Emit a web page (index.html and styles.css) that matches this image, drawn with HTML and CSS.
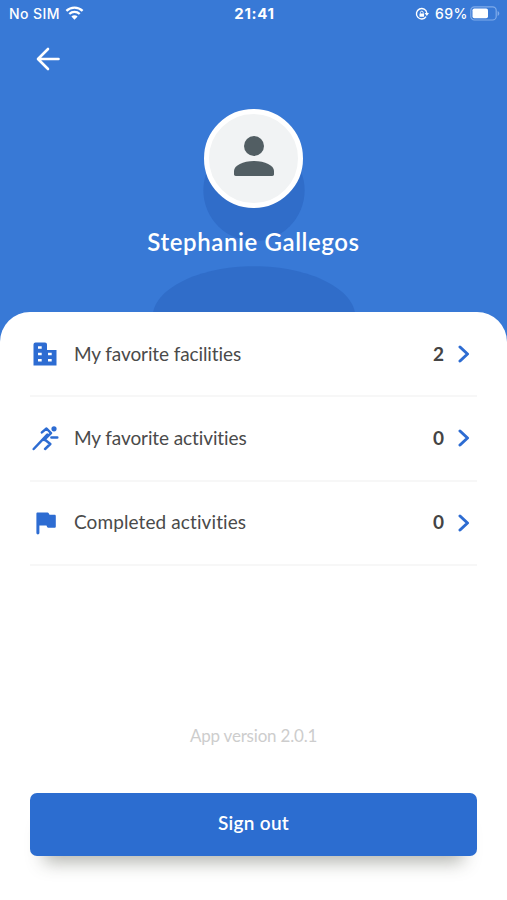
FILE: index.html
```html
<!DOCTYPE html>
<html lang="en">
<head>
  <meta charset="UTF-8">
  <meta name="viewport" content="width=device-width, initial-scale=1.0">
  <title>Profile</title>
  <link rel="stylesheet" href="styles.css">
</head>
<body>
<div class="screen">
  <header class="header">
    <svg class="backdrop" viewBox="0 0 24 24"><circle cx="12" cy="8" r="4"/><path d="M12 14c-4.4 0-8 1.8-8 4v2h16v-2c0-2.2-3.6-4-8-4z"/></svg>

    <div class="status">
      <div class="status-left">
        <span class="carrier">No SIM</span>
        <svg class="wifi" width="19" height="14" viewBox="0 0 19 14">
          <path d="M1.4 4.9a11.6 11.6 0 0 1 16.2 0M4.3 8a7.4 7.4 0 0 1 10.4 0" fill="none" stroke="#fff" stroke-width="2.3"/>
          <path d="M9.5 13.8L6.4 10.6a4.4 4.4 0 0 1 6.2 0z" fill="#fff"/>
        </svg>
      </div>
      <span class="clock">21:41</span>
      <div class="status-right">
        <svg class="lock" width="14" height="14" viewBox="0 0 14 14">
          <path d="M11 9.6A5.2 5.2 0 1 1 11.800 6" fill="none" stroke="#fff" stroke-width="1.400"/>
          <path d="M9.600 6h4.400l-2.200 3z" fill="#fff"/>
          <rect x="4.500" y="6.400" width="4.600" height="3.300" rx=".5" fill="#fff"/>
          <path d="M5.400 6.600V5.600a1.400 1.400 0 0 1 2.800 0v1" fill="none" stroke="#fff" stroke-width=".9"/>
        </svg>
        <span class="percent">69%</span>
        <svg class="battery" width="30" height="15" viewBox="0 0 30 15">
          <rect x=".8" y=".8" width="25.400" height="13.200" rx="3.600" fill="none" stroke="#7fabea" stroke-width="1.200"/>
          <rect x="2.500" y="2.500" width="15.500" height="9.800" rx="1.800" fill="#fff"/>
          <path d="M27.600 5v5c1-.4 1.700-1.300 1.700-2.500S28.600 5.400 27.600 5z" fill="#7fabea"/>
        </svg>
      </div>
    </div>

    <button class="back" aria-label="Back">
      <svg width="24" height="24" viewBox="0 0 24 24"><path d="M22.500 12H2.500M12 2L2 12l10 10" fill="none" stroke="#fff" stroke-width="2.600" stroke-linecap="round" stroke-linejoin="round"/></svg>
    </button>

    <div class="avatar">
      <svg width="60" height="60" viewBox="0 0 24 24"><circle cx="12" cy="8" r="4"/><path d="M12 14c-4.400 0-8 1.800-8 4v1.300c0 .4.300.7.700.7h14.600c.4 0 .7-.3.700-.7V18c0-2.200-3.600-4-8-4z"/></svg>
    </div>
    <h1 class="name">Stephanie Gallegos</h1>
  </header>

  <main class="card">
    <ul class="list">
      <li class="row">
        <svg class="icon" width="28" height="28" viewBox="0 0 28 28">
          <path fill-rule="evenodd" d="M4.500 2.500h8.500a2 2 0 0 1 2 2V10h9.500v15.500h-23v-21a2 2 0 0 1 2-2zM6 6.300v2.400h3.700V6.300zM6 12.800v2.400h3.700v-2.400zM6 19v2.400h3.700V19zM16 12.800v2.400h3.700v-2.400zM16 19v2.400h3.700V19z"/>
        </svg>
        <span class="label">My favorite facilities</span>
        <span class="count">2</span>
        <svg class="chevron" width="12" height="18" viewBox="0 0 12 18"><path d="M2 2l7.500 7L2 16"/></svg>
      </li>
      <li class="row">
        <svg class="icon" width="28" height="28" viewBox="0 0 28 28">
          <circle cx="22" cy="4.800" r="2.600"/>
          <path class="line" d="M9.900 8.400l4.600-3.900 4.500 4.600-7.100 6.900M1.700 25l13.600-14.300M13 15.700l5.300 4.300-5.200 5M19.400 13.500h5.900"/>
        </svg>
        <span class="label activities">My favorite activities</span>
        <span class="count">0</span>
        <svg class="chevron" width="12" height="18" viewBox="0 0 12 18"><path d="M2 2l7.500 7L2 16"/></svg>
      </li>
      <li class="row">
        <svg class="icon" width="28" height="28" viewBox="0 0 28 28">
          <path d="M5.500 3.500h10c.6 0 1 .3 1.200.8l.8 1.500H22.500c.8 0 1.300.5 1.300 1.300V17.500c0 .8-.5 1.300-1.300 1.300h-6.200c-.5 0-1-.3-1.200-.8l-.6-1.500H7.400v7.500c0 1.900-3 1.900-3 0V4.700C4.400 4 4.900 3.500 5.500 3.500z"/>
        </svg>
        <span class="label completed">Completed activities</span>
        <span class="count">0</span>
        <svg class="chevron" width="12" height="18" viewBox="0 0 12 18"><path d="M2 2l7.500 7L2 16"/></svg>
      </li>
    </ul>

    <p class="version">App version 2.0.1</p>
    <button class="signout">Sign out</button>
  </main>
</div>
</body>
</html>
```
FILE: styles.css
```css
* {
  box-sizing: border-box;
}
body {
  margin: 0;
  background: #fff;
  font-family: Lato, "Open Sans", sans-serif;
  font-variant-ligatures: none;
}
button {
  border: 0;
  font-family: inherit;
}
.screen {
  display: flex;
  flex-direction: column;
  height: 900px;
  overflow: hidden;
}

/* blue header */
.header {
  position: relative;
  display: flex;
  flex-direction: column;
  align-items: center;
  height: 342px;
  flex-shrink: 0;
  overflow: hidden;
  background: #3879d6;
  color: #fff;
}
.header > * {
  position: relative;
}
.header .backdrop {
  position: absolute;
  left: 102px;
  top: 89px;
  width: 304px;
  height: 304px;
  fill: #306dc9;
}
.status {
  display: grid;
  grid-template-columns: 1fr auto 1fr;
  align-items: center;
  width: 100%;
  height: 27px;
  padding: 0 7px 0 9px;
  font-family: Inter, sans-serif;
  font-size: 14px;
  font-weight: 500;
}
.status-left,
.status-right {
  display: flex;
  align-items: center;
}
.status-right {
  justify-content: flex-end;
}
.carrier {
  letter-spacing: 0.4px;
}
.wifi {
  margin: -2px 0 0 5px;
}
.clock {
  font-size: 15px;
  font-weight: 700;
  letter-spacing: 0.7px;
}
.percent {
  margin: 0 2px 0 6px;
  letter-spacing: 0.5px;
}
.back {
  display: flex;
  align-self: flex-start;
  margin: 20px 0 0 36px;
  padding: 0;
  background: none;
}
.avatar {
  display: flex;
  justify-content: center;
  width: 99px;
  height: 99px;
  margin-top: 38px;
  padding-top: 12px;
  border: 5px solid #fff;
  border-radius: 50%;
  background: #f1f3f4;
  fill: #525e63;
}
.name {
  margin: 19px 0 0;
  font-size: 24px;
  line-height: 30px;
  font-weight: 600;
  letter-spacing: 0.600px;
}

/* white sheet over the header */
.card {
  position: relative;
  display: flex;
  flex-direction: column;
  flex: 1;
  margin-top: -30px;
  padding: 0 30px;
  border-radius: 30px 30px 0 0;
  background: #fff;
}
.list {
  margin: 0;
  padding: 1px 0 0;
  list-style: none;
}
.row {
  display: flex;
  align-items: center;
  height: 84.300px;
  padding-right: 7px;
  border-bottom: 2px solid #f7f7f7;
}
.icon {
  margin-left: 2px;
  fill: #2d6cd2;
}
.icon .line {
  fill: none;
  stroke: #2d6cd2;
  stroke-width: 2.500;
  stroke-linecap: round;
  stroke-linejoin: round;
}
.label {
  flex: 1;
  margin: -2px 0 0 14px;
  color: #4a4a4a;
  font-size: 19px;
  letter-spacing: -0.1px;
}
.completed {
  letter-spacing: 0.1px;
}
.count {
  margin: -2px 14px 0 0;
  color: #444;
  font-size: 19px;
  font-weight: 700;
}
.chevron path {
  fill: none;
  stroke: #2d6cd2;
  stroke-width: 3;
  stroke-linecap: round;
  stroke-linejoin: round;
}
.version {
  margin: 158px 0 0;
  color: #cdcdcd;
  font-size: 17px;
  line-height: 24px;
  letter-spacing: -0.2px;
  text-align: center;
}
.signout {
  height: 63px;
  margin-top: 45px;
  padding-bottom: 4px;
  border-radius: 7px;
  background: #2c6dd0;
  box-shadow: 0 20px 18px -14px rgba(60, 65, 50, 0.4);
  color: #fff;
  font-size: 19px;
  font-weight: 600;
  letter-spacing: 0.3px;
}
```
